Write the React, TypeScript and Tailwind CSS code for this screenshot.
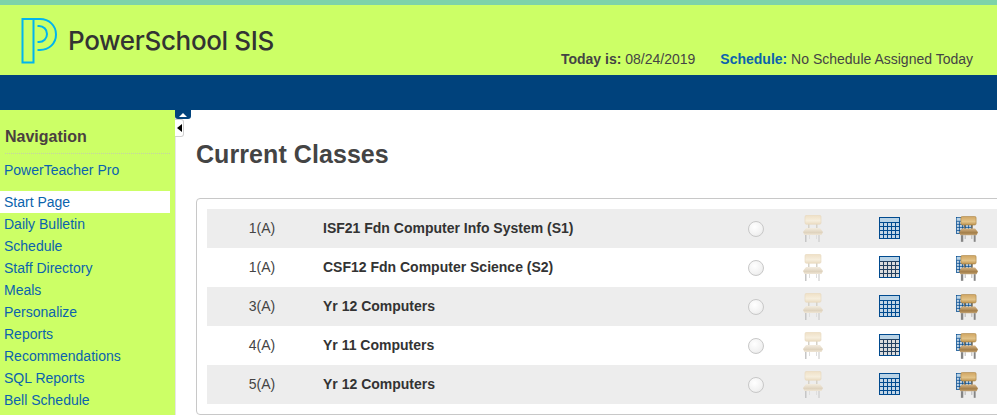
import React from 'react';

const navLinks = [
  'Daily Bulletin',
  'Schedule',
  'Staff Directory',
  'Meals',
  'Personalize',
  'Reports',
  'Recommendations',
  'SQL Reports',
  'Bell Schedule',
];

const classes = [
  { period: '1(A)', name: 'ISF21 Fdn Computer Info System (S1)', shaded: true },
  { period: '1(A)', name: 'CSF12 Fdn Computer Science (S2)', shaded: false },
  { period: '3(A)', name: 'Yr 12 Computers', shaded: true },
  { period: '4(A)', name: 'Yr 11 Computers', shaded: false },
  { period: '5(A)', name: 'Yr 12 Computers', shaded: true },
];

const Logo = () => (
  <svg width="36" height="46" viewBox="0 0 36 46" fill="none" stroke="#00b4ef" strokeWidth="2">
    <path d="M1.500 1H12.500V44.500H1.500Z" />
    <path d="M12.500 1H19C28 1 35 7.500 35 16.500C35 25.500 28 32 19 32H16.500" />
    <path d="M16.500 8H18C22.500 8 26 11.500 26 16C26 20.500 22.500 24 18 24H16.500" />
  </svg>
);

const Chair = ({ faded = true, width = 20, height = 27 }: { faded?: boolean; width?: number; height?: number }) => {
  const id = faded ? 'pale' : 'tan';
  const legWidth = faded ? 1.5 : 2.5;
  return (
    <svg width={width} height={height} viewBox="0 0 20 27" className="block">
      <defs>
        <linearGradient id={`${id}-back`} x1="0" y1="0" x2="0" y2="1">
          <stop offset="0" stopColor={faded ? '#efe0c6' : '#d0a562'} />
          <stop offset="0.6" stopColor={faded ? '#f6eedd' : '#e2c388'} />
          <stop offset="1" stopColor={faded ? '#eadcc2' : '#bd9350'} />
        </linearGradient>
        <linearGradient id={`${id}-seat`} x1="0" y1="0" x2="0" y2="1">
          <stop offset="0" stopColor={faded ? '#f3ecdf' : '#d6b484'} />
          <stop offset="0.65" stopColor={faded ? '#dfd3be' : '#a27d48'} />
          <stop offset="1" stopColor={faded ? '#efe6d6' : '#c4a474'} />
        </linearGradient>
      </defs>
      <rect x="5" y="8" width="1.500" height="7" fill={faded ? '#d6d2c8' : '#7d6f58'} />
      <rect x="13" y="8" width="1.500" height="7" fill={faded ? '#d6d2c8' : '#7d6f58'} />
      <rect x="2" y="0.300" width="16" height="9" rx="1.500" fill={`url(#${id}-back)`} stroke={faded ? '#e8d9bd' : '#a67f3e'} strokeWidth="0.6" />
      <path d="M3 13H17L20 17L18.500 20H1.500L0 17Z" fill={`url(#${id}-seat)`} />
      <rect x="2" y="20" width={legWidth} height="7" fill={faded ? '#c6c6c6' : '#858585'} />
      <rect x="15.500" y="20" width={legWidth - 0.5} height="7" fill={faded ? '#c6c6c6' : '#858585'} />
      <rect x="6" y="20" width="1" height="4" fill={faded ? '#dedede' : '#b0b0b0'} />
      <rect x="13" y="20" width="1" height="4" fill={faded ? '#dedede' : '#b0b0b0'} />
    </svg>
  );
};

const GridIcon = ({
  cell,
  line = '#004a8f',
  width = 21,
  height = 22,
}: {
  cell: string;
  line?: string;
  width?: number;
  height?: number;
}) => (
  <svg width={width} height={height} viewBox="0 0 21 22" className="block">
    <rect x="0.500" y="0.500" width="20" height="21" fill={cell} stroke="#004a8f" />
    <rect x="1" y="1" width="19" height="4" fill="#b9d3e6" />
    <path
      d="M1 5.500H20M1 9.500H20M1 13.500H20M1 17.500H20M4.500 6V21M8.500 6V21M12.500 6V21M16.500 6V21"
      stroke={line}
      strokeWidth="1"
    />
  </svg>
);

const ClassRow = ({ period, name, shaded }: { period: string; name: string; shaded: boolean }) => (
  <div className={`flex h-[39px] items-center ${shaded ? 'bg-[#ededed]' : 'bg-white'}`}>
    <div className="w-[110px] text-center text-[14px] text-[#444444]">{period}</div>
    <div className="w-[420px] pl-[6px] text-[14px] font-bold text-[#333333]">{name}</div>
    <div className="flex w-[38px] justify-center self-start pt-[12px]">
      <div className="h-4 w-4 rounded-full border border-[#c8c8c8] bg-[radial-gradient(circle_at_40%_35%,#ffffff,#f2f2f2_60%,#e2e2e2)]" />
    </div>
    <div className="flex w-[76px] justify-center self-start pt-[6px]">
      <Chair />
    </div>
    <div className="w-[76px] self-start pl-[28px] pt-[8px]">
      <GridIcon cell={shaded ? '#c3d6e6' : '#dcdcdc'} line={shaded ? '#004a8f' : '#23405f'} />
    </div>
    <div className="w-[77px] self-start pl-[29px] pt-[6px]">
      <div className="relative h-[27px] w-[23px]">
        <div className="absolute left-0 top-0">
          <GridIcon cell="#c3d6e6" width={16} height={21} />
        </div>
        <div className="absolute left-[3px] top-[1px]">
          <Chair faded={false} width={19} height={26} />
        </div>
      </div>
    </div>
  </div>
);

export default function App() {
  return (
    <div className="relative h-[415px] w-[997px] overflow-hidden bg-white font-['Liberation_Sans',Arial,sans-serif]">
      <div className="h-[5px] bg-[#7dd3a8]" />
      <header className="flex h-[70px] bg-[#ccff66]">
        <div className="flex items-start pl-[21px] pt-[13px]">
          <Logo />
          <span className="ml-[11px] mt-[6px] font-['Inter',sans-serif] text-[26px] font-medium leading-[34px] tracking-[-0.35px] text-[#333333]">
            PowerSchool SIS
          </span>
        </div>
        <div className="ml-auto flex items-end pb-[6px] pr-[24px] text-[14px] leading-[20px] text-[#444444]">
          <span>
            <b>Today is:</b> 08/24/2019
          </span>
          <span className="ml-[25px]">
            <b className="text-[#0b63ad]">Schedule:</b> No Schedule Assigned Today
          </span>
        </div>
      </header>
      <div className="h-[35px] bg-[#00427c]" />

      <div className="flex h-[305px]">
        <aside className="w-[176px] shrink-0 border-r border-[#e6e6e6] bg-[#ccff66] bg-clip-padding">
          <div className="mx-[5px] h-[44px] border-b border-dotted border-[#c4d0a8] pt-[17px] text-[16px] font-bold leading-[20px] text-[#4a4040]">
            Navigation
          </div>
          <a className="mt-[5px] block px-[4px] text-[14px] leading-[22px] text-[#0b63ad]">PowerTeacher Pro</a>
          <nav className="mt-[10px] text-[14px] leading-[22px] text-[#0b63ad]">
            <a className="block w-[170px] bg-white px-[4px]">Start Page</a>
            {navLinks.map((link) => (
              <a key={link} className="block px-[4px]">
                {link}
              </a>
            ))}
          </nav>
        </aside>

        <main className="min-w-0 flex-1 pl-[20px]">
          <h1 className="mt-[29px] text-[25px] font-bold leading-[30px] tracking-[0.07px] text-[#444444]">Current Classes</h1>
          <div className="mt-[29px] w-[830px] rounded-[4px] border border-[#c8c8c8] p-[10px]">
            {classes.map((row, i) => (
              <ClassRow key={i} {...row} />
            ))}
          </div>
        </main>
      </div>

      {/* collapse handles */}
      <div className="absolute left-[175px] top-[110px] flex h-[9px] w-[16px] items-center justify-center rounded-b-[3px] bg-[#00427c]">
        <div className="h-0 w-0 border-x-[4px] border-b-[4px] border-x-transparent border-b-white" />
      </div>
      <div className="absolute left-[175px] top-[119px] flex h-[18px] w-[9px] items-center justify-center rounded-r-[3px] border border-l-0 border-[#d0d0d0] bg-white">
        <div className="h-0 w-0 border-y-[4px] border-r-[5px] border-y-transparent border-r-black" />
      </div>
    </div>
  );
}
